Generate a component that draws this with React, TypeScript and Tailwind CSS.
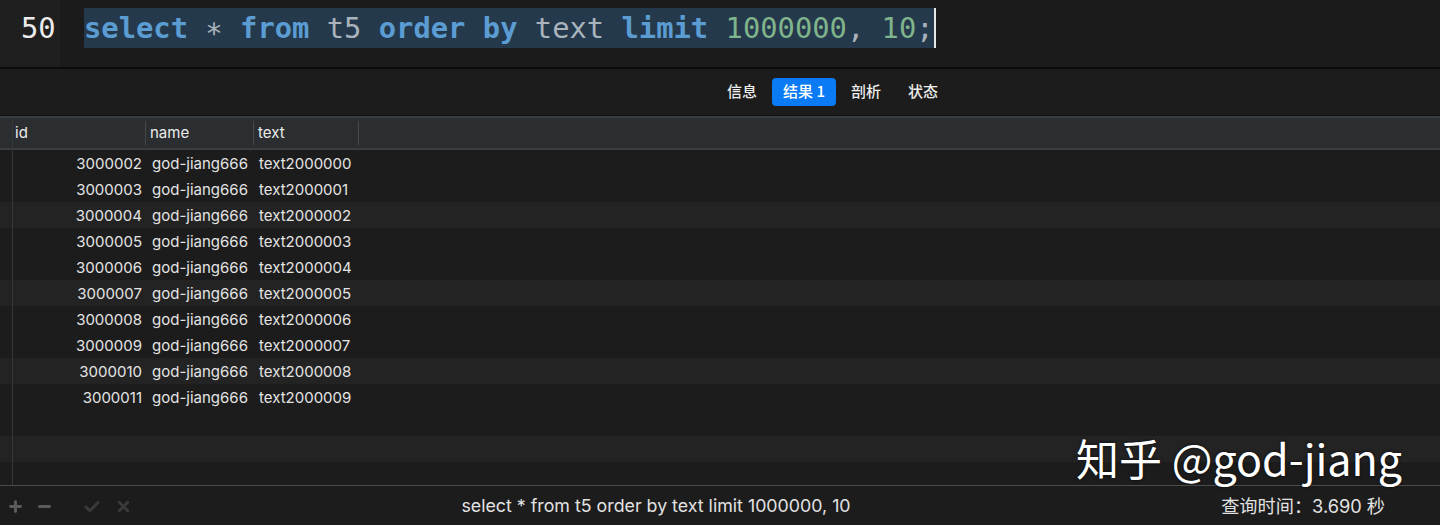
import { Check, Minus, Plus, X } from "lucide-react";

const rows = Array.from({ length: 10 }, (_, i) => ({
  id: String(3000002 + i),
  name: "god-jiang666",
  text: "text" + String(2000000 + i),
}));

const Kw = ({ children }: { children: string }) => (
  <span className="font-bold text-[#5b9dd3]">{children}</span>
);
const Plain = ({ children }: { children: string }) => (
  <span className="text-[#a9b3bc]">{children}</span>
);
const Num = ({ children }: { children: string }) => (
  <span className="text-[#80b48b]">{children}</span>
);

const Editor = () => (
  <div className="flex h-[67px] bg-[#1b1b1b] font-['DejaVu_Sans_Mono',monospace] text-[28.8px]">
    <div className="w-[60px] bg-[#1f1f1f] pl-[21px] pt-[8px] leading-[40px] text-[#ececec]">
      50
    </div>
    <div className="flex pl-[24px] pt-[8px]">
      <div className="h-[40px] bg-[#25394c] leading-[40px] whitespace-pre">
        <Kw>select</Kw>
        <Plain> ∗ </Plain>
        <Kw>from</Kw>
        <Plain> t5 </Plain>
        <Kw>order</Kw> <Kw>by</Kw>
        <Plain> text </Plain>
        <Kw>limit</Kw> <Num>1000000</Num>
        <Plain>, </Plain>
        <Num>10</Num>
        <Plain>;</Plain>
      </div>
      <div className="h-[40px] w-[2px] bg-[#e6e6e6]" />
    </div>
  </div>
);

const Tabs = () => (
  <div className="flex h-[46px] items-center gap-[3px] bg-[#1c1c1c] pb-[1px] pl-[715px] font-['Noto_Sans_CJK_SC',sans-serif] text-[15px] font-medium text-[#ececec]">
    <div className="px-[12px]">信息</div>
    <div className="flex h-[28px] items-center rounded-[4px] bg-[#0a7bf5] px-[11px] text-white">
      结果 1
    </div>
    <div className="px-[12px]">剖析</div>
    <div className="px-[12px]">状态</div>
  </div>
);

const Table = () => (
  <div className="relative flex-1 bg-[#1c1c1c] font-['Inter',sans-serif] text-[15px] text-[#e4e4e4]">
    <div className="h-[3px] border-t border-[#111] bg-[#3a3c3e]" />
    <div className="flex h-[30px] items-center bg-[#2b2e31] pl-[12px] text-[#ececec]">
      <div className="flex h-[24px] w-[134px] items-center border-r border-[#45494c] pl-[3px]">
        id
      </div>
      <div className="flex h-[24px] w-[108px] items-center border-r border-[#45494c] pl-[4px]">
        name
      </div>
      <div className="flex h-[24px] w-[105px] items-center border-r border-[#45494c] pl-[4px]">
        text
      </div>
    </div>
    <div className="h-[2px] bg-[#3b3e41]" />
    <div className="flex flex-col">
      {[...rows, null, null].map((r, i) => (
        <div
          key={i}
          className={`flex h-[26px] items-center pt-[2px] pl-[12px] ${
            i % 3 === 2 ? "bg-[#232323]" : "bg-[#1c1c1c]"
          }`}
        >
          {r && (
            <>
              <div className="w-[130px] text-right">{r.id}</div>
              <div className="w-[107px] pl-[10px]">{r.name}</div>
              <div className="pl-[10px]">{r.text}</div>
            </>
          )}
        </div>
      ))}
    </div>
    <div className="absolute top-[3px] bottom-0 left-[12px] w-px bg-[#363636]" />
    <div className="absolute right-[38px] bottom-[1px] font-['Noto_Sans_CJK_SC',sans-serif] text-[43px] leading-[54px] text-white [text-shadow:0_0_3px_rgba(0,0,0,0.8)]">
      知乎 @god-jiang
    </div>
  </div>
);

const StatusBar = () => (
  <div className="flex h-[40px] items-center border-t border-[#4c4c4c] bg-[#1c1c1c] pt-[2px]">
    <div className="flex w-[150px] items-center pl-[7px]">
      <Plus className="h-[17px] w-[17px] text-[#5c5c5c]" strokeWidth={4} />
      <Minus className="ml-[12px] h-[17px] w-[17px] text-[#5c5c5c]" strokeWidth={4} />
      <Check className="ml-[30px] h-[18px] w-[18px] text-[#3a3a3a]" strokeWidth={4} />
      <X className="ml-[14px] h-[17px] w-[17px] text-[#3a3a3a]" strokeWidth={4} />
    </div>
    <div className="flex-1 text-center font-['Inter',sans-serif] text-[17.8px] text-[#e2e2e2]">
      select * from t5 order by text limit 1000000, 10
    </div>
    <div className="w-[278px] pr-[55px] text-right font-['Inter','Noto_Sans_CJK_SC',sans-serif] text-[18.2px] text-[#e2e2e2]">
      查询时间：3.690 秒
    </div>
  </div>
);

export default function App() {
  return (
    <div className="flex h-[525px] w-[1440px] flex-col overflow-hidden bg-[#1c1c1c]">
      <Editor />
      <div className="h-[2px] bg-[#0b0b0b]" />
      <Tabs />
      <Table />
      <StatusBar />
    </div>
  );
}
